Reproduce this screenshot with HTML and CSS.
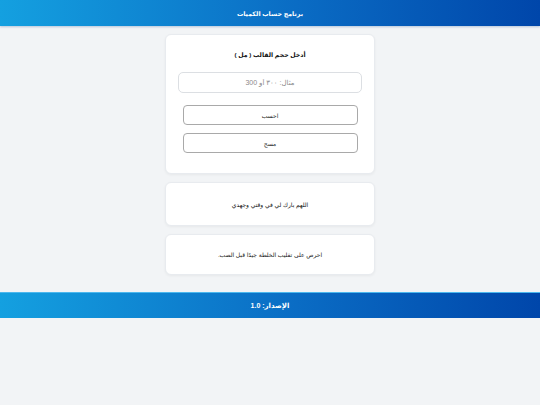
FILE: index.html
```html
<!DOCTYPE html>
<html lang="ar" dir="rtl">
<head>
<meta charset="utf-8">
<title>برنامج حساب الكميات</title>
<link rel="stylesheet" href="styles.css">
</head>
<body>
<header class="topbar">برنامج حساب الكميات</header>
<main class="content">
  <section class="card calc">
    <h2 class="label">أدخل حجم القالب ( مل )</h2>
    <input class="field" type="text" placeholder="مثال: ٣٠٠ أو 300">
    <button class="btn">احسب</button>
    <button class="btn">مسح</button>
  </section>
  <section class="card note">
    <p class="dua">اللهم بارك لي في وقتي وجهدي</p>
  </section>
  <section class="card note small">
    <p class="tip">احرص على تقليب الخلطة جيدًا قبل الصب.</p>
  </section>
</main>
<footer class="bottombar">الإصدار: 1.0</footer>
</body>
</html>
```
FILE: styles.css
```css
* { box-sizing: border-box; }
html, body { margin: 0; padding: 0; }
body {
  background: #f2f4f6;
  font-family: "Liberation Sans", Arial, "DejaVu Sans", sans-serif;
  color: #111;
  height: 405px;
}
.topbar {
  height: 26px;
  background: linear-gradient(90deg, #14a0e0 0%, #0a6cc4 55%, #0046aa 100%);
  color: #fff;
  font-size: 6.3px;
  font-weight: bold;
  display: flex;
  align-items: center;
  justify-content: center;
  box-shadow: 0 1px 2px rgba(0, 60, 140, 0.25);
}
.content {
  width: 210px;
  margin: 8px auto 0;
  display: flex;
  flex-direction: column;
  gap: 8px;
}
.card {
  background: #fff;
  border-radius: 6px;
  box-shadow: 0 1px 3px rgba(0, 0, 0, 0.05);
  border: 1px solid #e8ebef;
}
.calc {
  padding: 13px 12px 20px;
  display: flex;
  flex-direction: column;
  align-items: center;
}
.label {
  margin: 0 0 10px;
  font-size: 6.2px;
  font-weight: bold;
  line-height: 14px;
}
.field {
  width: 100%;
  height: 21px;
  border: 1px solid #dcdfe3;
  border-radius: 5px;
  text-align: center;
  font-family: inherit;
  font-size: 7px;
  margin-bottom: 12px;
}
.field::placeholder { color: #8a8a8a; }
.btn {
  width: 175px;
  height: 20px;
  background: #fff;
  border: 1px solid #a9a9a9;
  border-radius: 4px;
  font-family: inherit;
  font-size: 6px;
  color: #222;
  margin-bottom: 8px;
}
.btn:last-child { margin-bottom: 0; }
.note {
  display: flex;
  align-items: center;
  justify-content: center;
}
.note { height: 44px; }
.note.small { height: 41px; }
.dua { margin: 0; font-size: 6px; color: #111; }
.tip { margin: 0; font-size: 6px; color: #222; }
.bottombar {
  margin-top: 17px;
  height: 26px;
  background: linear-gradient(90deg, #14a0e0 0%, #0a6cc4 55%, #0046aa 100%);
  border-top: 1px solid #4cb8ee;
  color: #fff;
  font-size: 7px;
  font-weight: bold;
  display: flex;
  align-items: center;
  justify-content: center;
}
```
